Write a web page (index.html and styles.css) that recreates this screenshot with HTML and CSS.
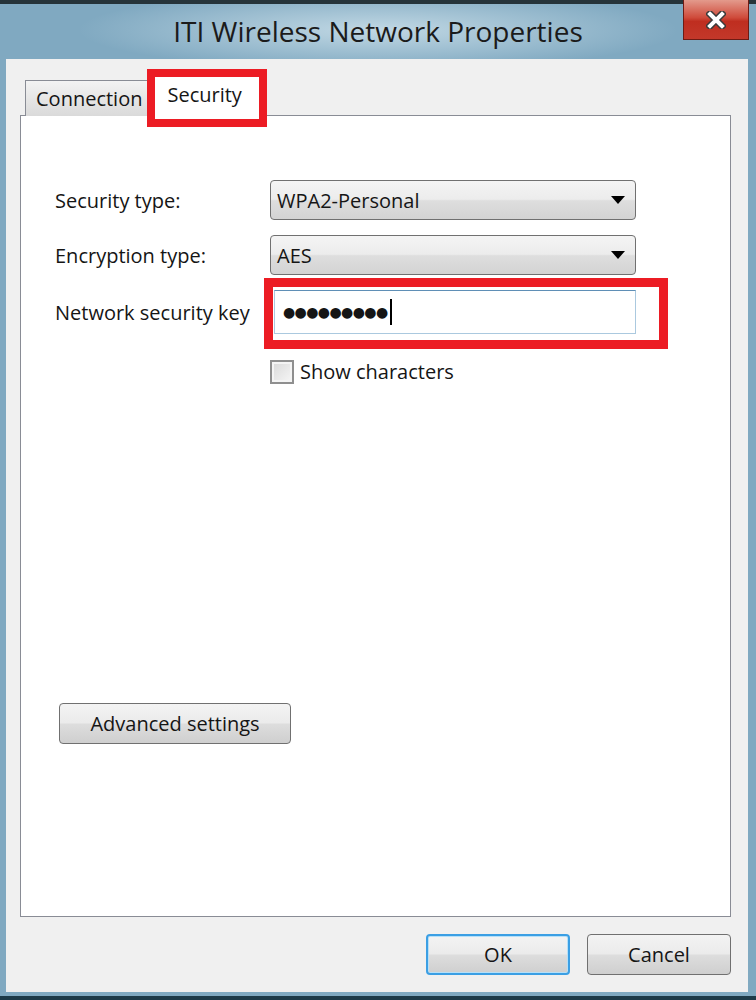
FILE: index.html
```html
<!doctype html>
<html>

<head>
  <title>ITI Wireless Network Properties</title>
  <link rel="stylesheet" href="styles.css">
</head>

<body>
  <div class="window">
    <div class="titlebar">
      <span></span>
      <h1 class="title">ITI Wireless Network Properties</h1>
      <button class="close" type="button" aria-label="Close">
        <svg width="20" height="18" viewBox="0 0 20 18">
          <path d="M4 3 L16 15 M16 3 L4 15" stroke="#3a3a3a" stroke-width="7" stroke-linecap="square" fill="none" />
          <path d="M4 3 L16 15 M16 3 L4 15" stroke="#ffffff" stroke-width="4" stroke-linecap="square" fill="none" />
        </svg>
      </button>
    </div>

    <div class="client">
      <div class="tabs">
        <div class="tab">Connection</div>
        <div class="tab selected">Security</div>
      </div>

      <div class="panel">
        <div class="fields">
          <label>Security type:</label>
          <div class="combo">
            <span>WPA2-Personal</span>
            <svg width="14" height="8" viewBox="0 0 14 8"><path d="M0 0 H14 L7 8 Z" fill="#000" /></svg>
          </div>

          <label>Encryption type:</label>
          <div class="combo">
            <span>AES</span>
            <svg width="14" height="8" viewBox="0 0 14 8"><path d="M0 0 H14 L7 8 Z" fill="#000" /></svg>
          </div>

          <label>Network security key</label>
          <div class="keywrap">
            <div class="keybox">
              <span class="dots">●●●●●●●●●</span><span class="caret"></span>
            </div>
          </div>

          <span></span>
          <label class="check">
            <input type="checkbox">
            <span>Show characters</span>
          </label>
        </div>

        <button class="btn advanced" type="button">Advanced settings</button>
      </div>

      <div class="actions">
        <button class="btn default" type="button">OK</button>
        <button class="btn" type="button">Cancel</button>
      </div>
    </div>
  </div>
</body>

</html>
```

FILE: styles.css
```css
*,
*::before,
*::after {
  box-sizing: border-box;
}

html {
  font-family: "Open Sans", "Noto Sans", sans-serif;
  font-size: 20px;
  color: #151515;
}

body {
  margin: 0;
  background: #1d3440;
}

.window {
  width: 756px;
  height: 1000px;
  display: flex;
  flex-direction: column;
  background:
    radial-gradient(ellipse 300px 40px at 378px 30px, rgba(215, 232, 240, 0.75), rgba(215, 232, 240, 0) 100%),
    #80a9c1;
  border-bottom: 4px solid #1d3a48;
}

.titlebar {
  height: 59px;
  flex: none;
  display: grid;
  grid-template-columns: 1fr auto 1fr;
  border-top: 4px solid #26343a;
}

.title {
  margin: 0;
  align-self: center;
  font-size: 28px;
  font-weight: normal;
  color: #1b1b1b;
  padding-bottom: 2px;
}

.close {
  justify-self: end;
  align-self: start;
  width: 66px;
  height: 40px;
  margin: -4px 7px 0 0;
  padding: 0;
  border: 1px solid #6e1b14;
  border-top: none;
  background: linear-gradient(#e39a8c, #cf4b3b 45%, #bf2e20 55%, #c3382a);
  display: flex;
  align-items: center;
  justify-content: center;
}

.client {
  flex: 1;
  margin: 0 8px 4px 6px;
  background: #f0f0f0;
  padding: 14px 17px 17px 14px;
  display: flex;
  flex-direction: column;
}

.tabs {
  display: flex;
  align-items: flex-end;
  padding-left: 5px;
  height: 43px;
  position: relative;
  z-index: 1;
  margin-bottom: -1px;
}

.tab {
  height: 36px;
  padding: 0 9px 0 10px;
  border: 1px solid #898c95;
  border-bottom: none;
  border-right: none;
  background: linear-gradient(#f3f3f3, #e6e6e6 50%, #dadada);
  line-height: 36px;
}

.tab.selected {
  position: relative;
  height: 44px;
  width: 112px;
  padding-left: 15px;
  background: #fff;
  border-right: 1px solid #898c95;
  line-height: 44px;
}

.tab.selected::after {
  content: "";
  position: absolute;
  left: -5px;
  top: -4px;
  right: -5px;
  bottom: -11px;
  border: 8px solid #ec1c24;
}

.panel {
  flex: 1;
  background: #fff;
  border: 1px solid #898c95;
  padding: 64px 20px 172px 34px;
  display: flex;
  flex-direction: column;
}

.fields {
  display: grid;
  grid-template-columns: 215px 366px;
  align-items: center;
  row-gap: 15px;
}

.combo {
  height: 40px;
  border: 1px solid #707070;
  border-radius: 4px;
  background: linear-gradient(#f4f4f4, #ececec 48%, #dedede 52%, #d3d3d3);
  display: flex;
  align-items: center;
  justify-content: space-between;
  padding: 0 10px 0 6px;
}

.keywrap {
  position: relative;
  padding-left: 4px;
}

.keywrap::after {
  content: "";
  position: absolute;
  left: -6px;
  top: -12px;
  right: -32px;
  bottom: -15px;
  border: 9px solid #ec1c24;
}

.keybox {
  height: 44px;
  border: 1px solid #abc9df;
  border-top-color: #5f8fb6;
  background: #fff;
  display: flex;
  align-items: center;
  padding-left: 8px;
}

.dots {
  font-family: "DejaVu Sans", sans-serif;
  font-size: 14px;
  letter-spacing: -0.6px;
}

.caret {
  width: 2px;
  height: 26px;
  background: #000;
  margin-left: 2px;
}

.check {
  display: flex;
  align-items: center;
  gap: 6px;
  margin-top: 9px;
}

.check input {
  appearance: none;
  margin: 0;
  width: 24px;
  height: 24px;
  border: 2px solid #8f8f8f;
  background: linear-gradient(135deg, #d8d8d8, #f6f6f6);
  box-shadow: inset 0 0 0 2px #f4f4f4;
}

.btn {
  font: inherit;
  color: inherit;
  height: 41px;
  border: 1px solid #707070;
  border-radius: 4px;
  background: linear-gradient(#f3f3f3, #ebebeb 48%, #dddddd 52%, #cfcfcf);
  padding: 0;
}

.advanced {
  margin-top: auto;
  margin-left: 4px;
  width: 232px;
}

.actions {
  display: flex;
  justify-content: flex-end;
  gap: 17px;
  margin-top: 17px;
}

.actions .btn {
  width: 144px;
}

.btn.default {
  border: 2px solid #3b9fe4;
  box-shadow: inset 0 0 0 1px #b6e0f8;
}
```
